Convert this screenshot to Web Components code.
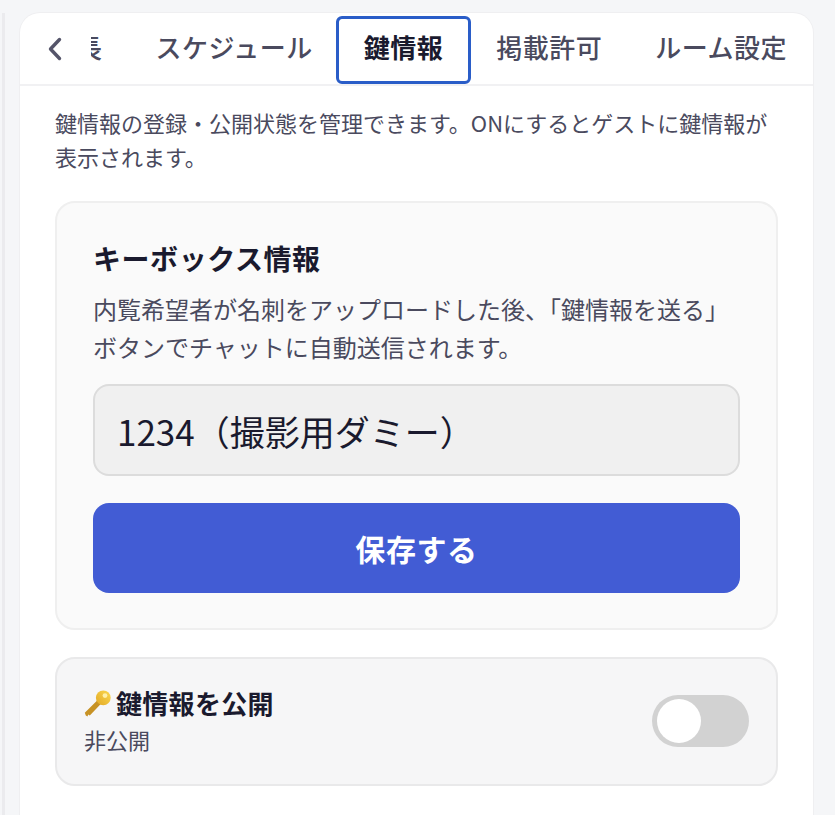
<!DOCTYPE html>
<html lang="ja">
<head>
<meta charset="utf-8">
<style>
  html, body { margin: 0; height: 100%; background: #f5f6f8; }
  body { font-family: "Noto Sans CJK JP", "Noto Sans", sans-serif; color: #1a1a2e; overflow: hidden; }
</style>
</head>
<body>
<settings-panel>
  <tab-strip></tab-strip>
  <p class="lead" slot="lead">鍵情報の登録・公開状態を管理できます。ONにするとゲストに鍵情報が表示されます。</p>
  <keybox-card></keybox-card>
  <publish-toggle></publish-toggle>
</settings-panel>

<script>
class SettingsPanel extends HTMLElement {
  constructor() {
    super();
    this.attachShadow({ mode: 'open' });
    this.shadowRoot.innerHTML = `
      <style>
        :host { display: block; height: 815px; box-sizing: border-box; padding: 13px 22px 0 20px; position: relative; }
        :host::before { content: ''; position: absolute; left: 2px; top: 13px; bottom: 0; width: 3px; background: #ebebee; }
        .panel { background: #fff; border-radius: 20px 20px 0 0; height: 100%; box-sizing: border-box;
          box-shadow: 0 0 0 1px #efeff1; }
        .body { padding: 19px 35px 0; display: flex; flex-direction: column; }
        ::slotted(.lead) { margin: 0 0 28px; font-size: 22px; line-height: 34px; color: #4a4a5e; }
        ::slotted(keybox-card) { margin-bottom: 27px; }
      </style>
      <div class="panel">
        <slot name="tabs"></slot>
        <div class="body">
          <slot name="lead"></slot>
          <slot></slot>
        </div>
      </div>`;
  }
  connectedCallback() {
    this.querySelector('tab-strip').slot = 'tabs';
  }
}

class TabStrip extends HTMLElement {
  constructor() {
    super();
    this.attachShadow({ mode: 'open' });
    const tabs = ['延長', 'スケジュール', '鍵情報', '掲載許可', 'ルーム設定'];
    this.shadowRoot.innerHTML = `
      <style>
        :host { display: flex; height: 71px; border-bottom: 2px solid #f1f1f3; }
        .back { flex: none; width: 71px; display: flex; align-items: center; padding-left: 27px; box-sizing: border-box; }
        .tabs { flex: 1; min-width: 0; display: flex; overflow: hidden; padding-top: 3px; box-sizing: border-box; }
        .tab { flex: none; box-sizing: border-box; height: 68px; display: flex; align-items: center; padding: 0 23.5px 7px; font-size: 26px; letter-spacing: .5px; font-weight: 500; color: #4a4a5e; border: 3px solid transparent; border-radius: 6px; white-space: nowrap; }
        .tab.active { color: #1a1a2e; font-weight: 700; border-color: #2a5dc8; padding: 0 25px 7px; margin: 0 -1.5px 0 -3.5px; }
      </style>
      <div class="back">
        <svg width="16" height="24" viewBox="0 0 16 24" fill="none" stroke="#55556a" stroke-width="3.4" stroke-linecap="round" stroke-linejoin="round"><path d="M12.5 2.5 3.5 12 12.5 21.5"/></svg>
      </div>
      <div class="tabs">${tabs.map(t => `<div class="tab${t === '鍵情報' ? ' active' : ''}">${t}</div>`).join('')}</div>`;
  }
  connectedCallback() {
    const strip = this.shadowRoot.querySelector('.tabs');
    const active = this.shadowRoot.querySelector('.active');
    // keep the selected tab at its scrolled position
    strip.scrollLeft = active.offsetLeft - strip.offsetLeft - 245.5;
  }
}

class KeyboxCard extends HTMLElement {
  constructor() {
    super();
    this.attachShadow({ mode: 'open' });
    this.shadowRoot.innerHTML = `
      <style>
        :host { display: block; }
        .card { background: #fafafa; border: 2px solid #efefef; border-radius: 20px; padding: 34px 36px 35px; }
        h2 { margin: 0 0 11px; font-size: 28px; letter-spacing: .55px; line-height: 42px; font-weight: 700; color: #1a1a2e; }
        p { margin: 0 0 18px; font-size: 24px; line-height: 38px; color: #4a4a5e; }
        .field { box-sizing: border-box; height: 92px; display: flex; align-items: center; padding: 0 22px; background: #f0f0f0; border: 2px solid #dcdcdc; border-radius: 16px; font-size: 35px; color: #1a1a2e; margin-bottom: 27px; }
        button { display: block; width: 100%; height: 90px; border: 0; border-radius: 16px; background: #425cd4; color: #fff; font: 700 30px "Noto Sans CJK JP", "Noto Sans", sans-serif; letter-spacing: .6px; }
      </style>
      <div class="card">
        <h2>キーボックス情報</h2>
        <p>内覧希望者が名刺をアップロードした後、「鍵情報を送る」ボタンでチャットに自動送信されます。</p>
        <div class="field">1234（撮影用ダミー）</div>
        <button>保存する</button>
      </div>`;
  }
}

class PublishToggle extends HTMLElement {
  constructor() {
    super();
    this.attachShadow({ mode: 'open' });
    this.shadowRoot.innerHTML = `
      <style>
        :host { display: block; }
        .card { box-sizing: border-box; height: 129px; display: flex; align-items: center; justify-content: space-between; background: #f6f6f7; border: 2px solid #e9e9ea; border-radius: 20px; padding: 0 27px; }
        .info { padding-bottom: 3px; }
        .title { display: flex; align-items: center; gap: 5px; font-size: 26px; letter-spacing: .3px; line-height: 38px; font-weight: 700; color: #1a1a2e; }
        .sub { font-size: 22px; line-height: 34px; color: #4a4a5e; }
        .switch { width: 97px; height: 52px; border-radius: 26px; background: #d2d2d2; padding: 5px; box-sizing: border-box; margin-top: -1px; }
        .knob { width: 44px; height: 44px; margin-top: -1px; border-radius: 50%; background: #fff; }
      </style>
      <div class="card">
        <div class="info">
          <div class="title">
            <svg width="27" height="27" viewBox="0 0 27 27">
              <defs><linearGradient id="k" x1="0" y1="1" x2="1" y2="0"><stop offset="0" stop-color="#e2a826"/><stop offset="1" stop-color="#fbd94f"/></linearGradient></defs>
              <path d="M.8 22.8 13.4 10.2l3.6 3.6L5.8 25.4l-1.6-.8-.7 1.8-1.7-.8z" fill="#c79225"/>
              <circle cx="19.3" cy="7.8" r="7.4" fill="url(#k)"/>
              <circle cx="21" cy="5.6" r="2.4" fill="#fff0a8"/>
            </svg>
            <span>鍵情報を公開</span>
          </div>
          <div class="sub">非公開</div>
        </div>
        <div class="switch"><div class="knob"></div></div>
      </div>`;
  }
}

customElements.define('settings-panel', SettingsPanel);
customElements.define('tab-strip', TabStrip);
customElements.define('keybox-card', KeyboxCard);
customElements.define('publish-toggle', PublishToggle);
</script>
</body>
</html>
